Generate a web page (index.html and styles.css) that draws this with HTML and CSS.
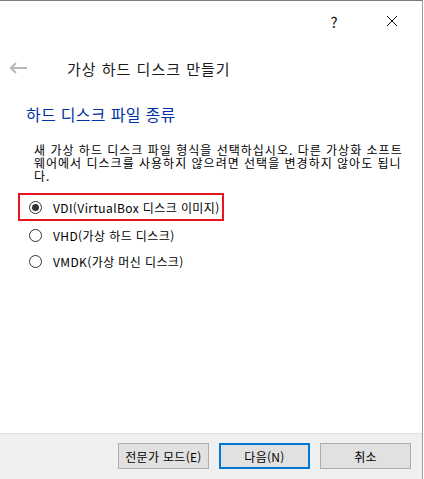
FILE: index.html
```html
<!DOCTYPE html>
<html lang="ko">
<head>
  <meta charset="UTF-8">
  <title>가상 하드 디스크 만들기</title>
  <meta name="viewport" content="width=device-width, initial-scale=1">
  <link rel="stylesheet" href="styles.css">
</head>
<body>
  <div class="window">
    <div class="titlebar">
      <span class="cap-btn help">?</span>
      <span class="cap-btn close">
        <svg width="12" height="12" viewBox="0 0 12 12"><path d="M1 1 L11 11 M11 1 L1 11" stroke="#111" stroke-width="1" fill="none"/></svg>
      </span>
    </div>

    <div class="wizard-head">
      <span class="back">
        <svg width="18" height="12" viewBox="0 0 18 12"><path d="M1 6 H17 M6 1 L1 6 L6 11" stroke="#b8b8b8" stroke-width="2" fill="none"/></svg>
      </span>
      <span class="wizard-title">가상 하드 디스크 만들기</span>
    </div>

    <div class="page">
      <div class="section-title">하드 디스크 파일 종류</div>
      <p class="desc">새 가상 하드 디스크 파일 형식을 선택하십시오. 다른 가상화 소프트<br>웨어에서 디스크를 사용하지 않으려면 선택을 변경하지 않아도 됩니<br>다.</p>

      <div class="options">
        <label class="option marked"><span class="radio checked"></span>VDI(VirtualBox 디스크 이미지)</label>
        <label class="option"><span class="radio"></span>VHD(가상 하드 디스크)</label>
        <label class="option"><span class="radio"></span>VMDK(가상 머신 디스크)</label>
      </div>
    </div>

    <div class="footer">
      <button class="btn">전문가 모드(E)</button>
      <button class="btn primary">다음(N)</button>
      <button class="btn">취소</button>
    </div>
  </div>
</body>
</html>
```

FILE: styles.css
```css
html, body {
  margin: 0;
  padding: 0;
  background: #fff;
  font-family: "Noto Sans CJK KR", "Noto Sans", sans-serif;
  color: #000;
}
.window {
  width: 422px;
  height: 478px;
  border-top: 1px solid #7a7a7a;
  border-right: 1px solid #9a9a9a;
  display: flex;
  flex-direction: column;
}
.titlebar {
  height: 40px;
  display: flex;
  justify-content: flex-end;
  align-items: center;
}
.cap-btn {
  display: flex;
  justify-content: center;
  align-items: center;
  height: 40px;
  font-size: 15px;
  color: #111;
}
.help {
  width: 56px;
}
.close {
  width: 60px;
}
.wizard-head {
  height: 54px;
  display: flex;
  align-items: center;
}
.back {
  display: flex;
  margin-left: 10px;
  width: 57px;
}
.wizard-title {
  font-size: 15px;
  letter-spacing: 1px;
  color: #1a1a1a;
}
.section-title {
  margin: 7px 0 0 26px;
  font-size: 16px;
  line-height: 24px;
  letter-spacing: 0.3px;
  color: #0033a8;
}
.desc {
  margin: 17px 0 0 34px;
  font-size: 12px;
  line-height: 13px;
  letter-spacing: 1px;
  white-space: nowrap;
  color: #000;
}
.options {
  margin-top: 11px;
  display: flex;
  flex-direction: column;
}
.option {
  display: flex;
  align-items: center;
  height: 26px;
  padding-left: 29px;
  font-size: 12px;
  letter-spacing: 0.4px;
  color: #000;
}
.option.marked {
  height: 24px;
  width: 193px;
  margin-left: 18px;
  padding-left: 9px;
  border: 2px solid #e8141e;
  margin-bottom: 1px;
}
.radio {
  width: 11px;
  height: 11px;
  border: 1px solid #333;
  border-radius: 50%;
  margin-right: 11px;
  display: flex;
  justify-content: center;
  align-items: center;
  background: #fff;
}
.radio.checked::after {
  content: "";
  width: 7px;
  height: 7px;
  border-radius: 50%;
  background: #333;
}
.footer {
  margin-top: auto;
  height: 46px;
  border-top: 1px solid #dfdfdf;
  background: #f0f0f0;
  display: flex;
  justify-content: flex-end;
  align-items: flex-start;
  gap: 10px;
  padding: 9px 11px 0 0;
  box-sizing: border-box;
}
.btn {
  width: 91px;
  height: 26px;
  border: 1px solid #adadad;
  background: #e1e1e1;
  font-family: inherit;
  font-size: 12px;
  letter-spacing: 0.3px;
  color: #000;
  padding: 0;
}
.btn.primary {
  border: 2px solid #0078d7;
}
```
